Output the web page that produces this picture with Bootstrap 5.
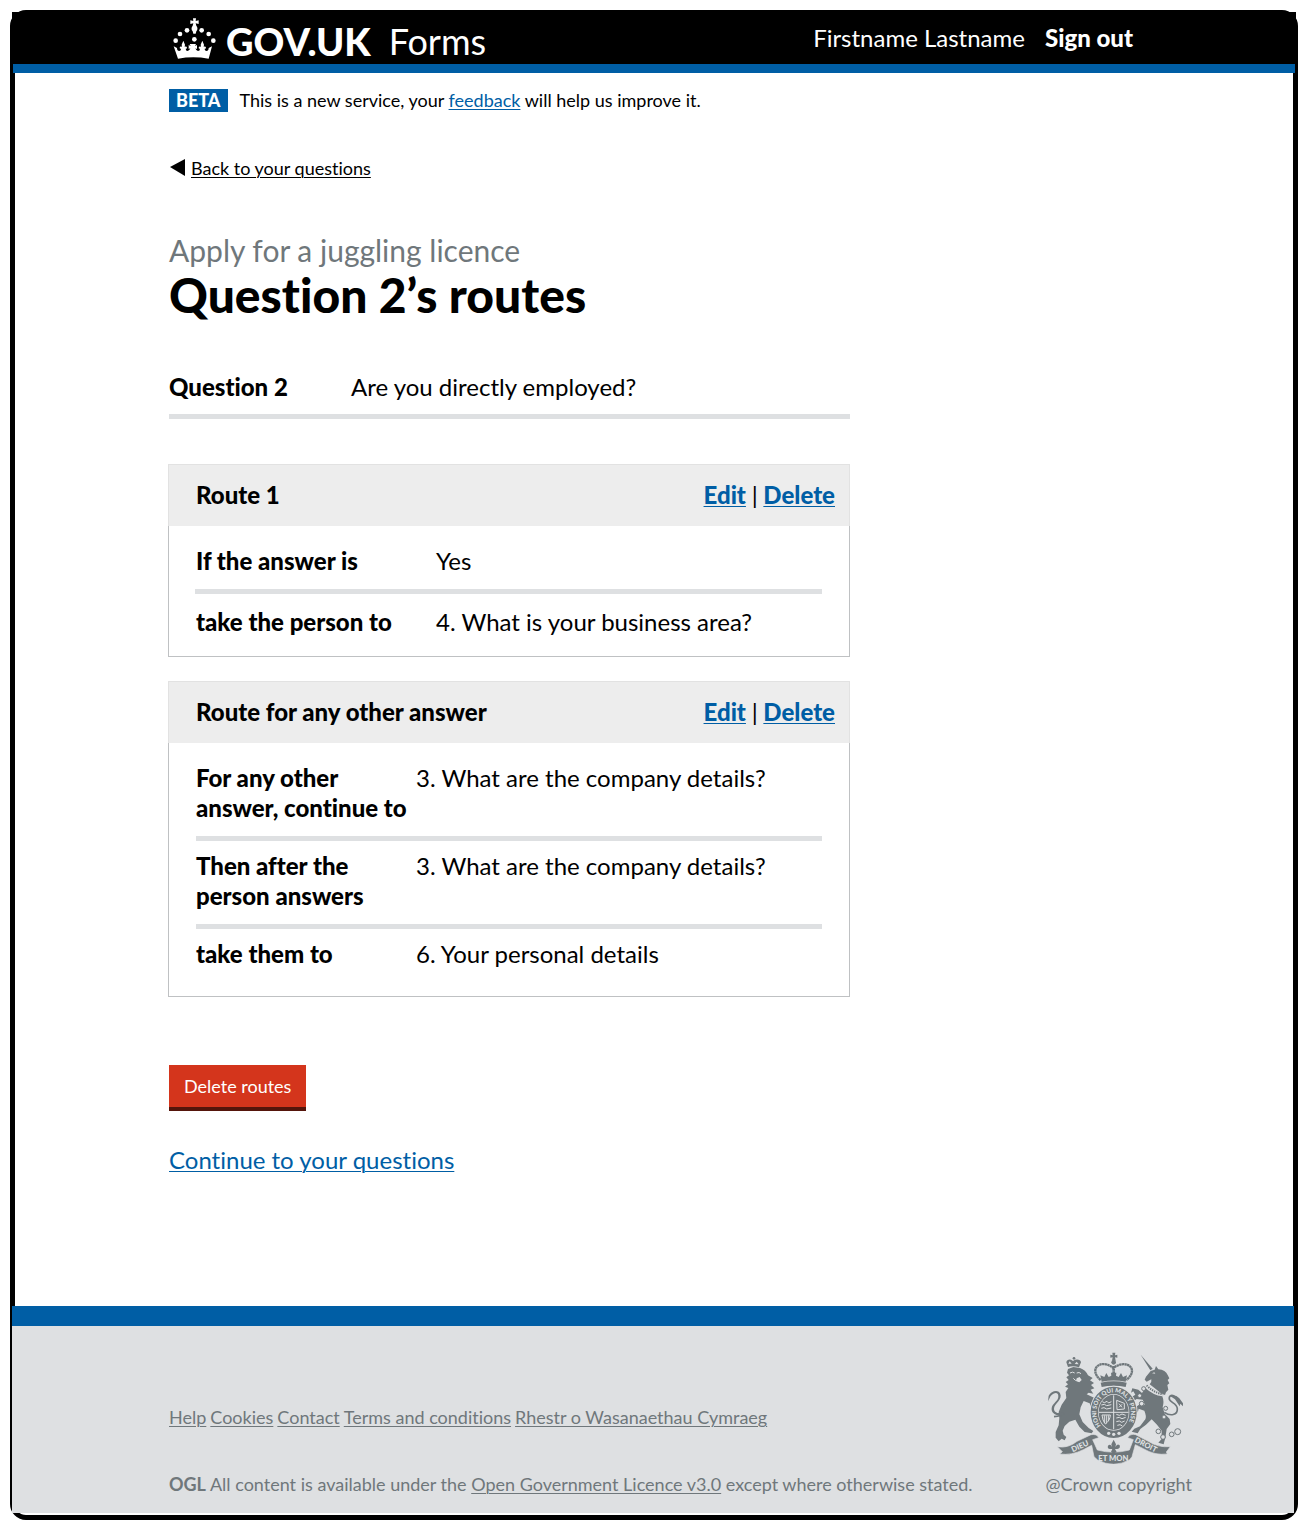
<!DOCTYPE html>
<html lang="en">
<head>
<meta charset="utf-8">
<meta name="viewport" content="width=device-width, initial-scale=1">
<title>Question 2’s routes – GOV.UK Forms</title>
<link href="https://cdn.jsdelivr.net/npm/bootstrap@5.3.0/dist/css/bootstrap.min.css" rel="stylesheet">
<style>
  body { font-family: Lato, "Open Sans", sans-serif; font-variant-ligatures: none; font-size: 24px; line-height: 30px; color: #000; background: #fff; }
  a { color: #005ea5; text-underline-offset: 2px; text-decoration-thickness: 1px; }
  .page-frame { margin: 10px 10px 11px; border: 5px solid #000; border-radius: 16px; }
  .site-header { margin: -3px -3px 0; background: #000; color: #fff; }
  .site-header-inner { height: 52px; padding: 0 163px 0 161px; }
  .header-bar { height: 9px; margin: 0 1px; background: #005ea5; }
  .brand-name { font-size: 38px; line-height: 46px; font-weight: 900; padding-top: 6px; margin-left: 10px; }
  .brand-product { font-size: 36px; line-height: 46px; padding-top: 6px; margin-left: 18px; }
  .account-nav { gap: 20px; }
  .account-nav a { font-weight: 900; }
  .page-main { padding: 16px 154px 131px; }
  .page-column { max-width: 681px; }
  .small-text { font-size: 18px; line-height: 23px; }
  .phase-tag { background: #005ea5; color: #fff; font-weight: 900; padding: 0 7px; margin-right: 12px; }
  .back-row { margin-top: 44px; line-height: 24px; gap: 6px; }
  .caption-text { margin-top: 52px; font-size: 30px; line-height: 36px; color: #6f777b; }
  .page-title { font-size: 48px; line-height: 54px; font-weight: 900; margin: 0; }
  .key { font-weight: 900; flex: none; }
  .question-row { margin: 50px 0 45px; padding-bottom: 12px; border-bottom: 5px solid #dee0e2; }
  .question-row .key { width: 182px; }
  .route-card { border: 1px solid #bfc1c3; margin: 0 0 24px -1px; }
  .route-head { margin: -1px -1px 0; height: 62px; padding: 0 14px 2px 27px; background: #ededed; border: 1px solid #e2e2e2; border-bottom: 0; }
  .route-head h2 { font-size: 24px; line-height: 30px; font-weight: 900; margin: 0; }
  .route-links { font-weight: 900; }
  .route-links span { font-weight: 400; }
  .route-body { padding: 7px 27px 6px 26px; }
  .route-body > div { padding: 13px 1px; }
  .route-body > div + div { border-top: 5px solid #dee0e2; }
  .route-body .key { width: 240px; }
  .route-body-wide { padding: 10px 27px 14px; }
  .route-body-wide > div { padding: 10px 0 13px; }
  .route-body-wide .key { width: 220px; }
  .btn-warning-red { background: #d4351c; color: #fff; border: 0; border-bottom: 4px solid #55150b; border-radius: 0; font-size: 18px; line-height: 24px; padding: 9px 15px; margin-top: 44px; }
  .btn-warning-red:hover { background: #aa2a16; color: #fff; }
  .continue-row { margin-top: 34px; }
  .site-footer { margin: 0 -1px 2px -3px; border-top: 20px solid #005ea5; background: #dee0e2; color: #6f777b; font-size: 18px; line-height: 24px; padding: 26px 102px 17px 157px; }
  .site-footer a { color: #6f777b; }
  .footer-text { padding-top: 53px; }
  .footer-nav { gap: 4px; margin-bottom: 43px; }
</style>
<script src="https://cdn.jsdelivr.net/npm/bootstrap@5.3.0/dist/js/bootstrap.bundle.min.js"></script>
</head>
<body>
<div class="page-frame">
  <header class="site-header">
    <div class="site-header-inner d-flex justify-content-between align-items-center">
      <div class="d-flex align-items-center">
        <svg width="43" height="41" viewBox="11 10 129 123" fill="#fff" aria-hidden="true">
          <path d="M71 11h9l-1 8 9-2v11l-9-2 2 7c5 6 4 13 0 17l-2 7h-7l-2-7c-4-4-5-11 0-17l2-7-9 2V17l9 2z"/>
          <circle cx="53" cy="47" r="7"/><circle cx="97" cy="47" r="7"/><circle cx="32" cy="58" r="7"/><circle cx="118" cy="58" r="7"/><circle cx="19" cy="78" r="7"/><circle cx="132" cy="78" r="7"/><circle cx="75" cy="74" r="7"/>
          <path d="M13 95l10 5q0 9 7 9 6-1 5-7-4 1-4-3 1-5 7-3l-1-6 5-12 5 12-1 6q6-2 7 3 0 4-4 3 0 7 6 7 6-1 8-8l-5 2V91l6 3-3-6h19l-3 6 6-3v12l-5-2q2 7 8 8 6 0 6-7-4 1-4-3 1-5 7-3l-1-6 5-12 5 12-1 6q6-2 7 3 0 4-4 3-1 6 5 7 7 0 7-9l10-5-10 37q-46-8-92 0z"/>
        </svg>
        <span class="brand-name">GOV.UK</span>
        <span class="brand-product">Forms</span>
      </div>
      <nav class="account-nav d-flex" aria-label="Account">
        <span>Firstname Lastname</span>
        <a class="text-white text-decoration-none" href="#">Sign out</a>
      </nav>
    </div>
    <div class="header-bar"></div>
  </header>

  <main class="page-main">
    <div class="page-column">
      <div class="small-text d-flex">
        <strong class="phase-tag">BETA</strong>
        <span>This is a new service, your <a href="#">feedback</a> will help us improve it.</span>
      </div>
      <div class="small-text back-row d-flex align-items-center">
        <svg width="16" height="18" viewBox="0 0 16 18" aria-hidden="true"><path d="M1 8L16 0v17z"/></svg>
        <a class="text-black" href="#">Back to your questions</a>
      </div>
      <div class="caption-text">Apply for a juggling licence</div>
      <h1 class="page-title">Question 2’s routes</h1>

      <dl class="question-row d-flex">
        <dt class="key">Question 2</dt>
        <dd class="mb-0">Are you directly employed?</dd>
      </dl>

      <section class="route-card">
        <div class="route-head d-flex justify-content-between align-items-center">
          <h2>Route 1</h2>
          <div class="route-links"><a href="#">Edit</a> <span>|</span> <a href="#">Delete</a></div>
        </div>
        <dl class="route-body mb-0">
          <div class="d-flex"><dt class="key">If the answer is</dt><dd class="mb-0">Yes</dd></div>
          <div class="d-flex"><dt class="key">take the person to</dt><dd class="mb-0">4. What is your business area?</dd></div>
        </dl>
      </section>

      <section class="route-card">
        <div class="route-head d-flex justify-content-between align-items-center">
          <h2>Route for any other answer</h2>
          <div class="route-links"><a href="#">Edit</a> <span>|</span> <a href="#">Delete</a></div>
        </div>
        <dl class="route-body route-body-wide mb-0">
          <div class="d-flex"><dt class="key">For any other<br>answer, continue to</dt><dd class="mb-0">3. What are the company details?</dd></div>
          <div class="d-flex"><dt class="key">Then after the<br>person answers</dt><dd class="mb-0">3. What are the company details?</dd></div>
          <div class="d-flex"><dt class="key">take them to</dt><dd class="mb-0">6. Your personal details</dd></div>
        </dl>
      </section>

      <button type="button" class="btn btn-warning-red">Delete routes</button>
      <div class="continue-row"><a href="#">Continue to your questions</a></div>
    </div>
  </main>

  <footer class="site-footer d-flex justify-content-between">
    <div class="footer-text">
      <nav class="footer-nav d-flex" aria-label="Footer">
        <a href="#">Help</a><a href="#">Cookies</a><a href="#">Contact</a><a href="#">Terms and conditions</a><a href="#">Rhestr o Wasanaethau Cymraeg</a>
      </nav>
      <div><strong>OGL</strong> All content is available under the <a href="#">Open Government Licence v3.0</a> except where otherwise stated.</div>
    </div>
    <div>
      <svg class="d-block" width="138" height="112" viewBox="48 35 414 336" fill="#6f777b" role="img" aria-label="Royal coat of arms">
        <!-- lion -->
        <g transform="translate(42 30)">
          <path d="M72 50l-5-14q2-10 14-8l6 4 6-4q16-3 18 8l-6 15q-17-6-33-1z"/>
          <path d="M73 40l4-7 6 7zM92 41l6-7 6 8z" fill="#dee0e2"/>
          <circle cx="90" cy="24" r="4"/>
          <path d="M72 56l16-6 20 3q17 6 24 22l14 8-8 7 12 8-9 6 10 10-11 4 8 12-14-3-6 5 22 10 10 14-2 14-9-9-8 8-4-10-18-7-9 19-4 21 10 23 18 18 14 9-5 7-21-4-16-16-12-21-18 6-14 13-6 14 3 12 8 7-5 10-9-5-9 8-9-11 0-17 9-20 2-22-2-18 9-22 14-20-2-18 8-12-10-4 9-7-7-7 9-6-7-8 8-6-6-8z"/>
          <path d="M30 199c14-1 25-4 30-10" fill="none" stroke="#6f777b" stroke-width="5"/>
          <path d="M60 195c-26 4-39-8-37-22 2-15 21-20 20-36-1-13-13-10-23 0l-8 16 2-17c7-13 27-20 34-7 10 19-18 31-18 46 0 11 12 16 28 12z"/>
          <path d="M78 68q8-5 14 0M98 68q8-4 13 2M88 84l6 6 12-1" fill="none" stroke="#dee0e2" stroke-width="3"/>
          <path d="M98 84l9-4 6 9-7 7-9-3z" fill="#dee0e2"/>
        </g>
        <!-- imperial crown -->
        <path d="M247 37h9l-1 8 7-2v9l-7-1 2 10h-11l2-10-7 1v-9l7 2z"/>
        <circle cx="251" cy="66" r="7"/>
        <path d="M212 119c-39-33 0-66 38-36 41-30 79 5 39 36" fill="none" stroke="#6f777b" stroke-width="7" stroke-dasharray="7 1"/>
        <path d="M251 77v29" stroke="#6f777b" stroke-width="8" stroke-dasharray="6 2"/>
        <path d="M211 105l12 5 6-12 7 12 8-4-1-9h16l-1 9 8 4 7-12 6 12 12-5-4 19q-36-7-72 0zM212 127q39-8 78 0l-3 13q-36-7-72 0z"/>
        <!-- unicorn -->
        <g transform="translate(240 30)">
          <path d="M92 13l36 42-7 5z"/>
          <path d="M122 62l12-4 4-11 7 10q22 2 28 17l5 10-5 5 5 10-6 5 3 14-7 8-3 8q-16-6-24-15l-22-17q7-8 5-15l-14 7-6-6 4-9z"/>
          <path d="M126 69l7-3 3 4z" fill="#dee0e2"/>
          <path d="M110 105q20 22 50 27" fill="none" stroke="#6f777b" stroke-width="6" stroke-dasharray="4 3"/>
          <path d="M106 113q24 22 51 25 6 15 1 33l6 19 15 16 2 15-11 15-4 26-5 20-16-5 10-11 0-25-14-18-16-16-17 16-17 13-8 13-18-5 8-9 17-7 16-21q4-10-3-26l-17-6-3 12-6-16 12-9 16 1-7-15-18-2-10 7-6-12 12-8-6-10-7 4 4-13 18 4 11 10z"/>
          <path d="M163 186c18 12 40 9 39-11-1-16-21-18-24-28-2-12 9-16 18-6" fill="none" stroke="#6f777b" stroke-width="5"/>
          <path d="M178 137q18-7 30 7l11 15 0 9-8-8-2 8-14-21-9-6z"/>
          <g fill="#dee0e2" stroke="#6f777b" stroke-width="3"><circle cx="101" cy="115" r="6"/><circle cx="89" cy="136" r="6"/><circle cx="95" cy="160" r="7"/><circle cx="167" cy="174" r="6"/><circle cx="162" cy="200" r="6"/><circle cx="145" cy="243" r="7"/><circle cx="159" cy="260" r="7"/><circle cx="185" cy="252" r="7"/><circle cx="203" cy="244" r="9"/></g>
        </g>
        <!-- garter and shield -->
        <ellipse cx="251" cy="216" rx="72" ry="80" fill="#dee0e2"/>
        <ellipse cx="251" cy="216" rx="58" ry="66" fill="none" stroke="#6f777b" stroke-width="22"/>
        <ellipse cx="251" cy="216" rx="45" ry="53"/>
        <path d="M251 165v102M207 216h89" stroke="#dee0e2" stroke-width="3"/>
        <g fill="none" stroke="#dee0e2" stroke-width="3">
          <path d="M217 184l6 3 8-4 5 5 8-4M214 194l9-2 7 4 14-3M214 204l8-2 8 4 14-3M259 222l9 3 8-4 11 4M259 233l9-2 8 4 11-4M259 244l9-2 7 4 9-4M262 255l8-2 7 4"/>
          <path d="M260 180l23 9v17l-22 2zM267 190l9 11m0-9l-9 9M216 224h25q-1 17-15 27-9-11-10-27zM223 225v23m6-23v24m6-24v17"/>
        </g>
        <path id="garter-arc" d="M214 258A52 60 0 1 1 288 258" fill="none"/>
        <text font-family="Lato, sans-serif" font-size="18" font-weight="900" fill="#dee0e2"><textPath href="#garter-arc" startOffset="2">HONI SOIT QUI MAL Y PENSE</textPath></text>
        <circle cx="236" cy="279" r="5" fill="#dee0e2"/><circle cx="251" cy="282" r="5" fill="#dee0e2"/><circle cx="267" cy="279" r="5" fill="#dee0e2"/>
        <!-- motto ribbon -->
        <path d="M82 319q32 6 59-16l42-20q18-3 23 9l-18 6 14 31q48 13 96 0l12-31-17-6q8-13 24-9l38 20q29 19 66 16l-12 16 3 6q-37 5-72-16l-24-12-10 36-7 9q-48 27-96 1l-11-10-7-34-25 13q-36 18-71 13l8-7z" stroke="#dee0e2" stroke-width="2"/>
        <g fill="#dee0e2" font-family="Lato, sans-serif" font-size="23" font-weight="900">
          <text transform="translate(128 336) rotate(-24)">DIEU</text>
          <text x="205" y="361">ET MON</text>
          <text transform="translate(312 304) rotate(27)">DROIT</text>
        </g>
        <path d="M251 298l7 14-2 8q6-12 13-5 3 10-7 11h-7l5 9-9 5-8-5 4-9h-7q-9-2-6-10 7-7 12 4l-2-8z"/>
      </svg>
      <div class="pt-2 text-end">@Crown copyright</div>
    </div>
  </footer>
</div>
</body>
</html>
